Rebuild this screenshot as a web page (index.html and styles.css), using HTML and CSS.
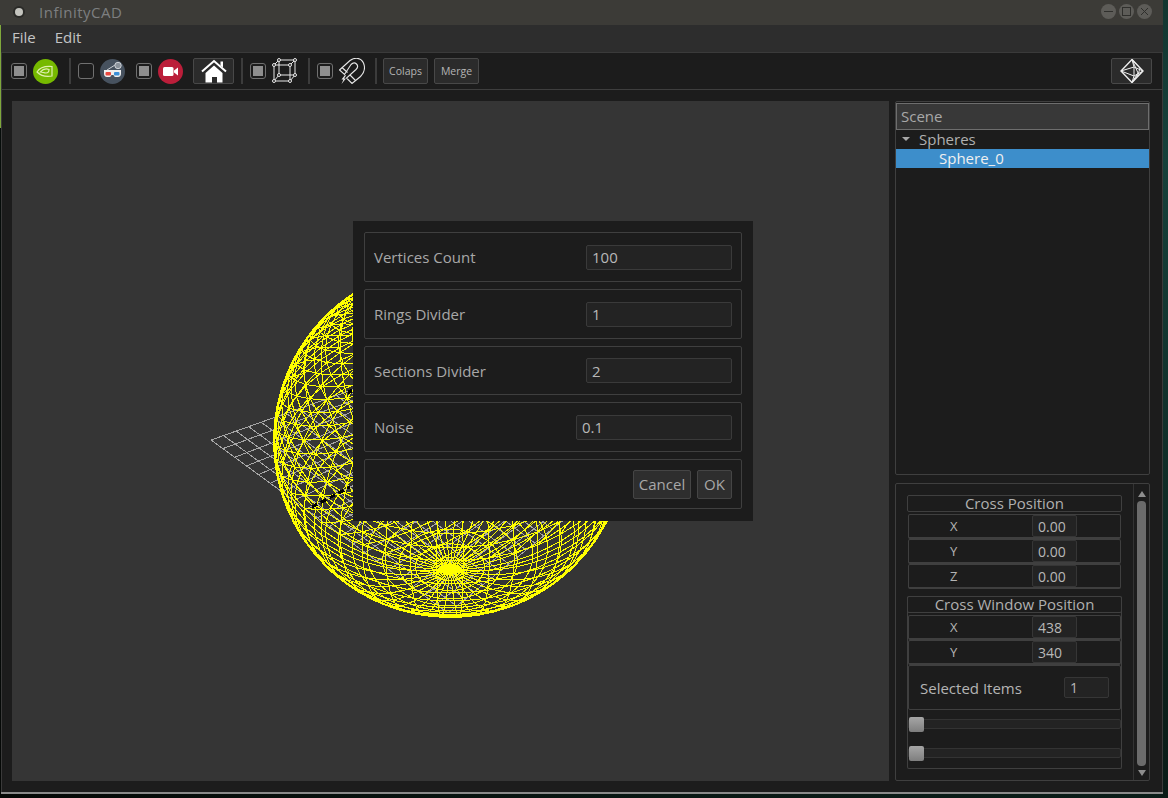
FILE: index.html
```html
<!DOCTYPE html>
<html lang="en">
<head>
<meta charset="utf-8">
<title>InfinityCAD</title>
<link rel="stylesheet" href="styles.css">
</head>
<body>
<div class="window">
  <header class="titlebar">
    <span class="app-dot"></span>
    <span class="app-title">InfinityCAD</span>
    <div class="win-btns">
      <span class="win-btn"><svg viewBox="0 0 15 15"><path d="M3 7.5h9" /></svg></span>
      <span class="win-btn"><svg viewBox="0 0 15 15"><rect x="3.500" y="3.500" width="8" height="8" /></svg></span>
      <span class="win-btn"><svg viewBox="0 0 15 15"><path d="M4 4l7 7M11 4l-7 7" /></svg></span>
    </div>
  </header>
  <nav class="menubar"><span>File</span><span>Edit</span></nav>
  <div class="app-body">
    <div class="toolbar">
      <span class="check on"></span>
      <svg class="round-ico" viewBox="0 0 25 25"><circle cx="12.5" cy="12.5" r="12.5" fill="#76b900"/><path d="M4 13c3-5 9-6 15-5.500V17c-6 1-11 0-15-4z" fill="none" stroke="#e0efb0" stroke-width="1.200"/><path d="M7.500 13c2.500-3 6-3.500 8.500-2.500 0 2-1 3.500-3 3.500-2 0-3.500-1-5.500-1z" fill="none" stroke="#e0efb0" stroke-width="1.200"/></svg>
      <span class="sep sep-first"></span>
      <span class="check"></span>
      <svg class="round-ico" viewBox="0 0 25 25"><circle cx="12.5" cy="12.5" r="12.5" fill="#47525f"/><path d="M7 11l8-5" stroke="#cfd3d8" stroke-width="1"/><circle cx="18" cy="6.500" r="3.200" fill="#8a929b" stroke="#cfd3d8"/><path d="M4 11h17v3.500c0 2-1 3.500-3 3.500h-2.500c-1 0-1.500-1-2-2h-2c-.5 1-1 2-2 2H7c-2 0-3-1.500-3-3.500z" fill="#f0f0f0"/><rect x="5.500" y="13" width="5.500" height="3.500" rx="1" fill="#e8483f"/><rect x="14" y="13" width="5.500" height="3.500" rx="1" fill="#3b8fd8"/></svg>
      <span class="gap-s"></span>
      <span class="check on"></span>
      <svg class="round-ico" viewBox="0 0 25 25"><circle cx="12.5" cy="12.5" r="12.5" fill="#bb1e3a"/><rect x="5" y="8" width="10.500" height="9" rx="1.500" fill="#fff"/><path d="M16 11.500l4-3v8l-4-3z" fill="#fff"/></svg>
      <button class="tool-btn home-btn"><svg viewBox="0 0 26 24" width="26" height="24"><path d="M1 12.500 13 2l12 10.500" fill="none" stroke="#fff" stroke-width="2"/><path d="M19.500 2.500h2.500v6l-2.500-2z" fill="#fff"/><path d="M4.500 14 13 6.500l8.500 7.500v9.500h-5.500V18h-5v5.500H4.500z" fill="#fff"/></svg></button>
      <span class="sep sep-after-home"></span>
      <span class="check on"></span>
      <svg class="line-ico" viewBox="0 0 26 26" width="26" height="26"><g fill="none" stroke="#e8e8e8" stroke-width="1"><path d="M7 2h16v15H7zM2 7h16v16H2zM2 7l5-5M18 7l5-5M2 23l5-6M18 23l5-6"/></g><g fill="#1c1c1c" stroke="#e8e8e8"><circle cx="7" cy="2" r="1.500"/><circle cx="23" cy="2" r="1.500"/><circle cx="2" cy="7" r="1.500"/><circle cx="18" cy="7" r="1.500"/><circle cx="7" cy="17" r="1.500"/><circle cx="23" cy="17" r="1.500"/><circle cx="2" cy="23" r="1.500"/><circle cx="18" cy="23" r="1.500"/></g></svg>
      <span class="sep"></span>
      <span class="check on"></span>
      <svg class="line-ico" viewBox="0 0 26 26" width="26" height="26"><g fill="none" stroke="#e8e8e8" stroke-width="1.100"><path d="M.5 12 11 2.500C16-1 22-.5 24.500 5c2 5 1 9.500-3 13.500L13 25.500 7.500 20 17 11.500c2-2 2-4 .5-5.500C16 4.500 14 4.500 12 6.500l-6.500 10z"/><path d="M3 9.500l5.500 5M11 17l5.500 5.500"/></g><path d="M6 17l-3.500 4.500h2L2.500 26l4.500-5.500H5l2-3z" fill="#e8e8e8"/></svg>
      <span class="sep sep-last"></span>
      <button class="tool-btn text-btn">Colaps</button>
      <button class="tool-btn text-btn">Merge</button>
      <button class="tool-btn cube-btn"><svg viewBox="0 0 24 24" width="24" height="24"><g fill="none" stroke="#eee" stroke-width="1"><path d="M12 .5 23 12 12 23.500 1 12z" stroke-width="1.400"/><path d="M1 12l13-4 9 4-9 5-13-5zM12 .5 14 8v9l-2 6.500M12 .5 18 14l-6 9.500M12 .5 20 9l-2 7-6 7.500"/></g></svg></button>
    </div>
    <div class="main">
      <section class="viewport" id="viewport">
        <svg class="scene" id="scene" width="877" height="680" viewBox="0 0 877 680"></svg>
        <form class="dialog">
          <div class="dlg-row"><label>Vertices Count</label><span class="field w146">100</span></div>
          <div class="dlg-row"><label>Rings Divider</label><span class="field w146">1</span></div>
          <div class="dlg-row dlg-row-short"><label>Sections Divider</label><span class="field w146">2</span></div>
          <div class="dlg-row"><label>Noise</label><span class="field w156">0.1</span></div>
          <div class="dlg-row dlg-actions"><button type="button" class="dlg-btn btn-cancel">Cancel</button><button type="button" class="dlg-btn btn-ok">OK</button></div>
        </form>
      </section>
      <aside class="side">
        <div class="tree">
          <div class="tree-head">Scene</div>
          <div class="tree-item"><span class="caret"></span>Spheres</div>
          <div class="tree-item selected">Sphere_0</div>
        </div>
        <div class="props">
          <div class="props-inner">
            <div class="group">
              <div class="group-title">Cross Position</div>
              <div class="prop"><span class="axis">X</span><span class="num">0.00</span></div>
              <div class="prop"><span class="axis">Y</span><span class="num">0.00</span></div>
              <div class="prop"><span class="axis">Z</span><span class="num">0.00</span></div>
            </div>
            <div class="group group-last">
              <div class="group-title">Cross Window Position</div>
              <div class="prop"><span class="axis">X</span><span class="num">438</span></div>
              <div class="prop"><span class="axis">Y</span><span class="num">340</span></div>
              <div class="selected-items"><span>Selected Items</span><span class="num small">1</span></div>
              <div class="slider"><span class="thumb"></span></div>
              <div class="slider"><span class="thumb"></span></div>
            </div>
          </div>
          <div class="scrollbar">
            <span class="arrow up"></span>
            <span class="scroll-thumb"></span>
            <span class="arrow down"></span>
          </div>
        </div>
      </aside>
    </div>
  </div>
</div>
<script src="scene.js"></script>
</body>
</html>
```
FILE: styles.css
```css
* { box-sizing: border-box; }
html, body { height: 100%; }
body {
  margin: 0;
  overflow: hidden;
  background:
    linear-gradient(#7fa83c, #7fa83c) 0 25px / 1px 103px no-repeat,
    radial-gradient(circle at 100% 20%, #16403a 0, #0b1f1a 40%, #050806 100%);
  font-family: "Open Sans", "Noto Sans", "DejaVu Sans", sans-serif;
  color: #b4b4b4;
}
.window {
  width: 1162px;
  height: 794px;
  margin-left: 1px;
  display: flex;
  flex-direction: column;
  background: #1c1c1c;
  border-bottom: 2px solid #8a8a8a;
}
.titlebar {
  height: 25px;
  flex: none;
  margin-left: -1px;
  display: flex;
  align-items: center;
  padding: 0 11px 2px 15px;
  background: #3c3b37;
}
.app-dot {
  width: 8px;
  height: 8px;
  border-radius: 50%;
  background: #c4c4be;
  box-shadow: 0 0 0 2px #2a2a27;
}
.app-title { margin-left: 16px; font-size: 15px; letter-spacing: .5px; color: #7d7f80; }
.win-btns { margin-left: auto; display: flex; gap: 3px; }
.win-btn { width: 15px; height: 15px; border-radius: 50%; background: #5d5c58; display: flex; }
.win-btn svg { width: 15px; height: 15px; fill: none; stroke: #2f2f2c; stroke-width: 1; }
.menubar {
  height: 27px;
  flex: none;
  display: flex;
  align-items: center;
  gap: 19px;
  padding: 0 11px 3px;
  background: #2d2d2d;
  font-size: 15px;
  color: #c4c4c4;
}
.app-body { flex: 1; display: flex; flex-direction: column; min-height: 0; border: 1px solid #3a3a3a; border-bottom: 0; }
.toolbar {
  height: 37px;
  flex: none;
  display: flex;
  align-items: center;
  padding: 0 10px 0 9px;
  border-bottom: 1px solid #3e3e3e;
}
.check {
  width: 16px;
  height: 16px;
  flex: none;
  border: 1px solid #707070;
  border-radius: 3px;
  margin-right: 6px;
}
.check.on { background: linear-gradient(#8f8f8f, #8f8f8f) center / 10px 10px no-repeat; }
.round-ico { width: 25px; height: 25px; flex: none; }
.sep { width: 2px; height: 26px; flex: none; margin: 0 7px 0 10px; background: #3c3c3c; }
.sep-first { margin-left: 11px; }
.sep-after-home { margin: 0 7px 0 7px; }
.sep-last { margin-right: 6px; }
.gap-s { width: 11px; flex: none; }
.line-ico { flex: none; }
.tool-btn {
  height: 26px;
  flex: none;
  padding: 0;
  display: flex;
  align-items: center;
  justify-content: center;
  background: #2b2b2b;
  border: 1px solid #484848;
  border-radius: 2px;
  color: #b4b4b4;
  font: inherit;
}
.home-btn { width: 41px; margin-left: 10px; }
.text-btn { width: 45px; font-size: 10.500px; margin-right: 6px; }
.cube-btn { width: 41px; margin-left: auto; }
.main { flex: 1; display: flex; min-height: 0; padding: 11px 12px 11px 10px; gap: 6px; }
.viewport { position: relative; width: 877px; flex: none; background: #353535; }
.scene { position: absolute; left: 0; top: 0; display: block; }
.dialog {
  position: absolute;
  left: 341px;
  top: 120px;
  width: 400px;
  height: 300px;
  padding: 11px;
  display: flex;
  flex-direction: column;
  gap: 7px;
  background: #1c1c1c;
}
.dlg-row {
  height: 50px;
  flex: none;
  display: flex;
  align-items: center;
  justify-content: space-between;
  padding: 0 9px;
  border: 1px solid #3f3f3f;
  border-radius: 2px;
  font-size: 15px;
  color: #a8a8a8;
}
.dlg-row-short { height: 49px; }
.field {
  height: 25px;
  display: flex;
  align-items: center;
  padding: 0 5px;
  background: #232323;
  border: 1px solid #3a3a3a;
  border-radius: 2px;
  font-size: 15px;
  color: #b8b8b8;
}
.w146 { width: 146px; }
.w156 { width: 156px; }
.dlg-actions { justify-content: flex-end; gap: 6px; }
.dlg-btn {
  height: 29px;
  padding: 0;
  background: #2e2e2e;
  border: 1px solid #454545;
  border-radius: 2px;
  font: inherit;
  font-size: 15px;
  color: #a8a8a8;
}
.btn-cancel { width: 58px; }
.btn-ok { width: 35px; }
.side { flex: 1; min-width: 0; display: flex; flex-direction: column; gap: 8px; }
.tree { height: 374px; flex: none; padding: 1px 0; border: 1px solid #3f3f3f; border-radius: 2px; font-size: 15px; }
.tree-head {
  height: 27px;
  display: flex;
  align-items: center;
  padding: 0 4px 1px;
  background: #383838;
  border: 1px solid #6e6e6e;
  color: #a8a8a8;
}
.tree-item { height: 19px; display: flex; align-items: center; padding: 0 0 2px 23px; color: #b0b0b0; position: relative; }
.caret {
  position: absolute;
  left: 6px;
  top: 7px;
  border: 4px solid transparent;
  border-top: 4px solid #a8a8a8;
  border-bottom: 0;
}
.tree-item.selected { padding-left: 43px; background: #3d8ecb; color: #f0f0f0; }
.props { flex: 1; min-height: 0; display: flex; border: 1px solid #3f3f3f; border-radius: 2px; }
.props-inner { flex: 1; padding: 11px 0 0 11px; min-width: 0; }
.group { width: 215px; margin-bottom: 7px; font-size: 15px; }
.group-title {
  height: 17px;
  display: flex;
  align-items: center;
  justify-content: center;
  padding-bottom: 2px;
  border: 1px solid #3f3f3f;
  border-radius: 2px;
  margin-bottom: 2px;
  color: #b0b0b0;
}
.prop {
  height: 25px;
  margin: 0 1px;
  display: flex;
  align-items: center;
  border: 1px solid #3f3f3f;
  border-bottom-width: 2px;
  border-radius: 2px;
  padding-left: 41px;
  font-size: 14px;
}
.axis { width: 82px; flex: none; font-size: 13px; }
.num {
  width: 45px;
  height: 22px;
  display: flex;
  align-items: center;
  padding: 0 5px;
  background: #232323;
  border: 1px solid #363636;
  border-radius: 2px;
  color: #b8b8b8;
}
.selected-items {
  height: 45px;
  margin: 0 1px;
  display: flex;
  align-items: center;
  justify-content: space-between;
  padding: 0 11px;
  border: 1px solid #3f3f3f;
  border-radius: 2px;
  font-size: 15px;
}
.num.small { height: 21px; font-size: 14px; }
.group-last { border: 1px solid #3f3f3f; border-top: 0; border-radius: 2px; height: 173px; }
.group-last .group-title { margin: 0 -1px 2px; }
.group-last .prop, .group-last .selected-items { margin: 0; }
.slider { position: relative; height: 10px; margin: 9px 0 19px; background: #232323; border: 1px solid #333; border-radius: 2px; }
.slider + .slider { margin: 0; }
.thumb {
  position: absolute;
  left: 0;
  top: -3px;
  width: 15px;
  height: 15px;
  border-radius: 2px;
  background: linear-gradient(#a6a6a6, #7e7e7e);
}
.scrollbar { width: 16px; flex: none; display: flex; flex-direction: column; align-items: center; padding: 7px 0 4px; border-left: 1px solid #333; }
.arrow { border: 4px solid transparent; flex: none; }
.arrow.up { border-bottom: 6px solid #8e8e8e; border-top: 0; }
.arrow.down { border-top: 6px solid #8e8e8e; border-bottom: 0; }
.scroll-thumb { flex: 1; width: 9px; margin: 4px 0; background: #6b6b6b; border-radius: 4px; }
```
FILE: scene.js
```js
(function () {
  var NS = 'http://www.w3.org/2000/svg';
  var svg = document.getElementById('scene');
  function add(d, stroke, width, dash) {
    var p = document.createElementNS(NS, 'path');
    p.setAttribute('d', d);
    p.setAttribute('fill', 'none');
    p.setAttribute('stroke', stroke);
    p.setAttribute('stroke-width', width);
    p.setAttribute('shape-rendering', 'crispEdges');
    if (dash) p.setAttribute('stroke-dasharray', dash);
    svg.appendChild(p);
  }
  /* floor grid, coordinates relative to the viewport */
  var L = [199, 339], T = [450, 250], R = [610, 372], B = [436, 512];
  function mix(a, b, t) { return [a[0] + (b[0] - a[0]) * t, a[1] + (b[1] - a[1]) * t]; }
  var g = '', n = 20, i;
  for (i = 0; i <= n; i++) {
    var t = i / n;
    var a = mix(L, T, t), b = mix(B, R, t), c = mix(L, B, t), e = mix(T, R, t);
    g += 'M' + a[0] + ' ' + a[1] + 'L' + b[0] + ' ' + b[1];
    g += 'M' + c[0] + ' ' + c[1] + 'L' + e[0] + ' ' + e[1];
  }
  add(g, '#a6a6a6', 1);
  /* wireframe sphere, tilted so the lower pole faces the viewer */
  var cx = 438, cy = 340, r = 176, rings = 32, sects = 42;
  var tilt = 43 * Math.PI / 180, cs = Math.cos(tilt), sn = Math.sin(tilt);
  function pt(i, j) {
    var th = Math.PI * i / rings, ph = 2 * Math.PI * j / sects;
    var x = Math.sin(th) * Math.cos(ph), y = Math.cos(th), z = Math.sin(th) * Math.sin(ph);
    var py = y * cs - z * sn;
    return (cx + r * x).toFixed(1) + ' ' + (cy - r * py).toFixed(1);
  }
  var d = '', jj, ii;
  for (ii = 1; ii < rings; ii++) {
    for (jj = 0; jj < sects; jj++) {
      d += 'M' + pt(ii, jj) + 'L' + pt(ii, jj + 1);
      d += 'M' + pt(ii, jj) + 'L' + pt(ii + 1, jj);
      if (ii < rings / 2) d += 'M' + pt(ii, jj) + 'L' + pt(ii + 1, jj + 1);
    }
  }
  for (jj = 0; jj < sects; jj++) d += 'M' + pt(0, jj) + 'L' + pt(1, jj);
  /* thicker rim, as in the wireframe's dense silhouette */
  var rim = 'M' + (cx - r) + ' ' + cy + 'A' + r + ' ' + r + ' 0 1 0 ' + (cx + r) + ' ' + cy + 'A' + r + ' ' + r + ' 0 1 0 ' + (cx - r) + ' ' + cy;
  add(d, '#ffff00', 1);
  add(rim, '#ffff00', 2);
  add('M300 406L338 386', '#000000', 3, '6 4');
  add('M336 291L340 290', '#000000', 4);
})();
```
